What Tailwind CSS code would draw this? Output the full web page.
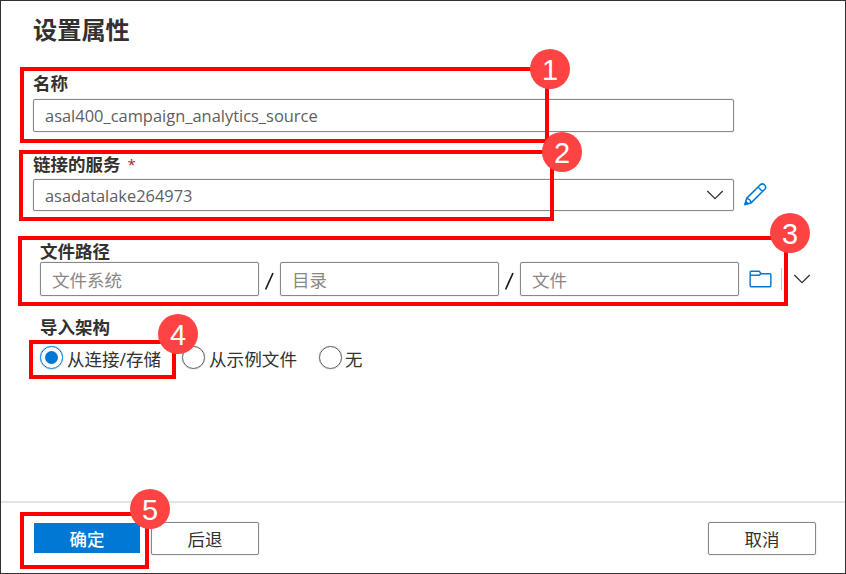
<!DOCTYPE html>
<html lang="zh-CN">
<head>
<meta charset="utf-8">
<title>设置属性</title>
<script src="https://cdn.jsdelivr.net/npm/@tailwindcss/browser@4"></script>
</head>
<body class="bg-white">
<div class="relative flex h-[574px] w-[846px] flex-col overflow-hidden border border-[#323130] bg-white font-['Open_Sans','Noto_Sans_CJK_SC',sans-serif] text-[17.5px] leading-5 text-[#323130]">
  <main class="flex h-[500px] flex-col pt-[13px] pl-8">
    <h1 class="h-8 text-[24.2px] leading-8 font-bold">设置属性</h1>

    <label class="mt-[27px] h-5 font-bold text-[#323130]">名称</label>
    <div class="mt-[6px] flex h-[33px] w-[701px] items-center rounded-[2px] border border-[#8a8886] px-[11px] text-[#605e5c] shadow-[0_0_1px_#8a8886]"><span class="text-[16.45px]">asal400_campaign_analytics_source</span></div>

    <label class="mt-[22px] flex h-5 gap-[7px] font-bold text-[#323130]">链接的服务<span class="text-[15px] font-normal text-[#a4262c]">*</span></label>
    <div class="mt-[5px] flex h-[32px] items-center">
      <div class="flex h-[32px] w-[701px] items-center justify-between rounded-[2px] border border-[#8a8886] pr-[9px] pl-[11px] text-[#605e5c] shadow-[0_0_1px_#8a8886]"><span class="pt-px text-[16.4px]">asadatalake264973</span>
        <svg class="h-[10px] w-[18px]" viewBox="0 0 18 10" fill="none" stroke="#323130" stroke-width="1.3"><path d="M1.3 1 9 8.7 16.7 1"/></svg>
      </div>
      <svg class="mb-[2px] ml-[9px] h-6 w-6" viewBox="0 0 24 24" fill="none" stroke="#0078d4" stroke-width="1.5" stroke-linejoin="round"><path d="M2 22.5 3.6 16.4 17.3 2.7a3.2 3.2 0 0 1 4.5 4.5L8.1 20.9ZM15 5l4.5 4.5M3.6 16.4q3.8.2 4.5 4.5"/><path d="M2 22.5l.9-3 2.1 2.1Z" fill="#0078d4"/></svg>
    </div>

    <label class="mt-[30px] ml-[7px] h-5 font-bold text-[#323130]">文件路径</label>
    <div class="mt-px ml-[7px] flex h-[34px] items-center text-[#8a8886]">
      <div class="flex h-[34px] w-[219px] items-center rounded-[2px] border border-[#8a8886] px-[11px] pt-px shadow-[0_0_1px_#8a8886]">文件系统</div>
      <svg class="mt-1 h-[18px] w-[21px]" viewBox="0 0 21 18" fill="none" stroke="#201f1e" stroke-width="1.7"><path d="M6.6 17.5 14 1"/></svg>
      <div class="flex h-[34px] w-[219px] items-center rounded-[2px] border border-[#8a8886] px-[11px] pt-px shadow-[0_0_1px_#8a8886]">目录</div>
      <svg class="mt-1 h-[18px] w-[21px]" viewBox="0 0 21 18" fill="none" stroke="#201f1e" stroke-width="1.7"><path d="M6.6 17.5 14 1"/></svg>
      <div class="flex h-[34px] w-[219px] items-center rounded-[2px] border border-[#8a8886] px-[11px] pt-px shadow-[0_0_1px_#8a8886]">文件</div>
      <svg class="ml-[10px] h-[18px] w-[23px]" viewBox="0 0 24 18" preserveAspectRatio="none" fill="none" stroke="#0078d4" stroke-width="1.5" stroke-linejoin="round"><path d="M1.2 5V2.2Q1.2 1.2 2.2 1.2H10.6L12.7 3.7H21.8Q22.8 3.7 22.8 4.7V15.8Q22.8 16.8 21.8 16.8H2.2Q1.2 16.8 1.2 15.8ZM1.2 5.2H10.8L12.7 3.7"/></svg>
      <div class="ml-[9px] h-[22px] w-px bg-[#c8c6c4]"></div>
      <svg class="ml-[11px] h-[10px] w-[18px]" viewBox="0 0 18 10" fill="none" stroke="#323130" stroke-width="1.3"><path d="M1.3 1 9 8.7 16.7 1"/></svg>
    </div>

    <label class="mt-[21px] ml-[7px] h-5 font-bold text-[#323130]">导入架构</label>
    <div class="mt-[8px] ml-[7px] flex h-[24px] items-center text-[#323130]">
      <div class="flex w-[142px] items-center gap-[4px]"><span class="flex h-[23px] w-[23px] items-center justify-center rounded-full border border-[#0078d4] shadow-[0_0_1px_#0078d4]"><i class="h-[13px] w-[13px] rounded-full bg-[#0078d4]"></i></span><span class="mt-[3px]">从连接/存储</span></div>
      <div class="flex w-[137px] items-center gap-[4px]"><span class="h-[23px] w-[23px] rounded-full border border-[#605e5c] shadow-[0_0_1px_#8a8886]"></span><span class="mt-[3px] text-[17.6px]">从示例文件</span></div>
      <div class="flex items-center gap-[3px]"><span class="h-[23px] w-[23px] rounded-full border border-[#605e5c] shadow-[0_0_1px_#8a8886]"></span><span class="mt-[3px]">无</span></div>
    </div>
  </main>
  <footer class="flex flex-1 items-start border-t-2 border-[#e5e4e3] pt-[19px] pr-[29px] pl-[33px]">
    <div class="mt-px flex h-[30px] w-[106px] items-center justify-center bg-[#0078d4] pt-px font-medium text-white">确定</div>
    <div class="ml-[11px] flex h-[33px] w-[108px] items-center justify-center rounded-[2px] border border-[#8a8886] pt-px shadow-[0_0_1px_#8a8886]">后退</div>
    <div class="ml-auto flex h-[33px] w-[108px] items-center justify-center rounded-[2px] border border-[#8a8886] pt-px shadow-[0_0_1px_#8a8886]">取消</div>
  </footer>

  <!-- Step callouts -->
  <div class="absolute top-[66px] left-[19px] h-[76px] w-[529px] border-4 border-[#ff0000]"></div>
  <div class="absolute top-[149px] left-[18px] h-[71px] w-[535px] border-4 border-[#ff0000]"></div>
  <div class="absolute top-[235px] left-[17px] h-[70px] w-[770px] border-4 border-[#ff0000]"></div>
  <div class="absolute top-[339px] left-[28px] h-[39px] w-[147px] border-4 border-[#ff0000]"></div>
  <div class="absolute top-[511px] left-[19px] h-[57px] w-[129px] border-4 border-[#ff0000]"></div>
  <div class="absolute top-[48px] left-[529px] flex h-10 w-10 items-center justify-center rounded-full bg-[#ff4343] pt-px font-['Liberation_Sans',sans-serif] text-[29px] text-white">1</div>
  <div class="absolute top-[131px] left-[541px] flex h-10 w-10 items-center justify-center rounded-full bg-[#ff4343] pt-px font-['Liberation_Sans',sans-serif] text-[29px] text-white">2</div>
  <div class="absolute top-[212px] left-[769px] flex h-10 w-10 items-center justify-center rounded-full bg-[#ff4343] pt-px font-['Liberation_Sans',sans-serif] text-[29px] text-white">3</div>
  <div class="absolute top-[313px] left-[157px] flex h-10 w-10 items-center justify-center rounded-full bg-[#ff4343] pt-px font-['Liberation_Sans',sans-serif] text-[29px] text-white">4</div>
  <div class="absolute top-[488px] left-[129px] flex h-10 w-10 items-center justify-center rounded-full bg-[#ff4343] pt-px font-['Liberation_Sans',sans-serif] text-[29px] text-white">5</div>
</div>
</body>
</html>
